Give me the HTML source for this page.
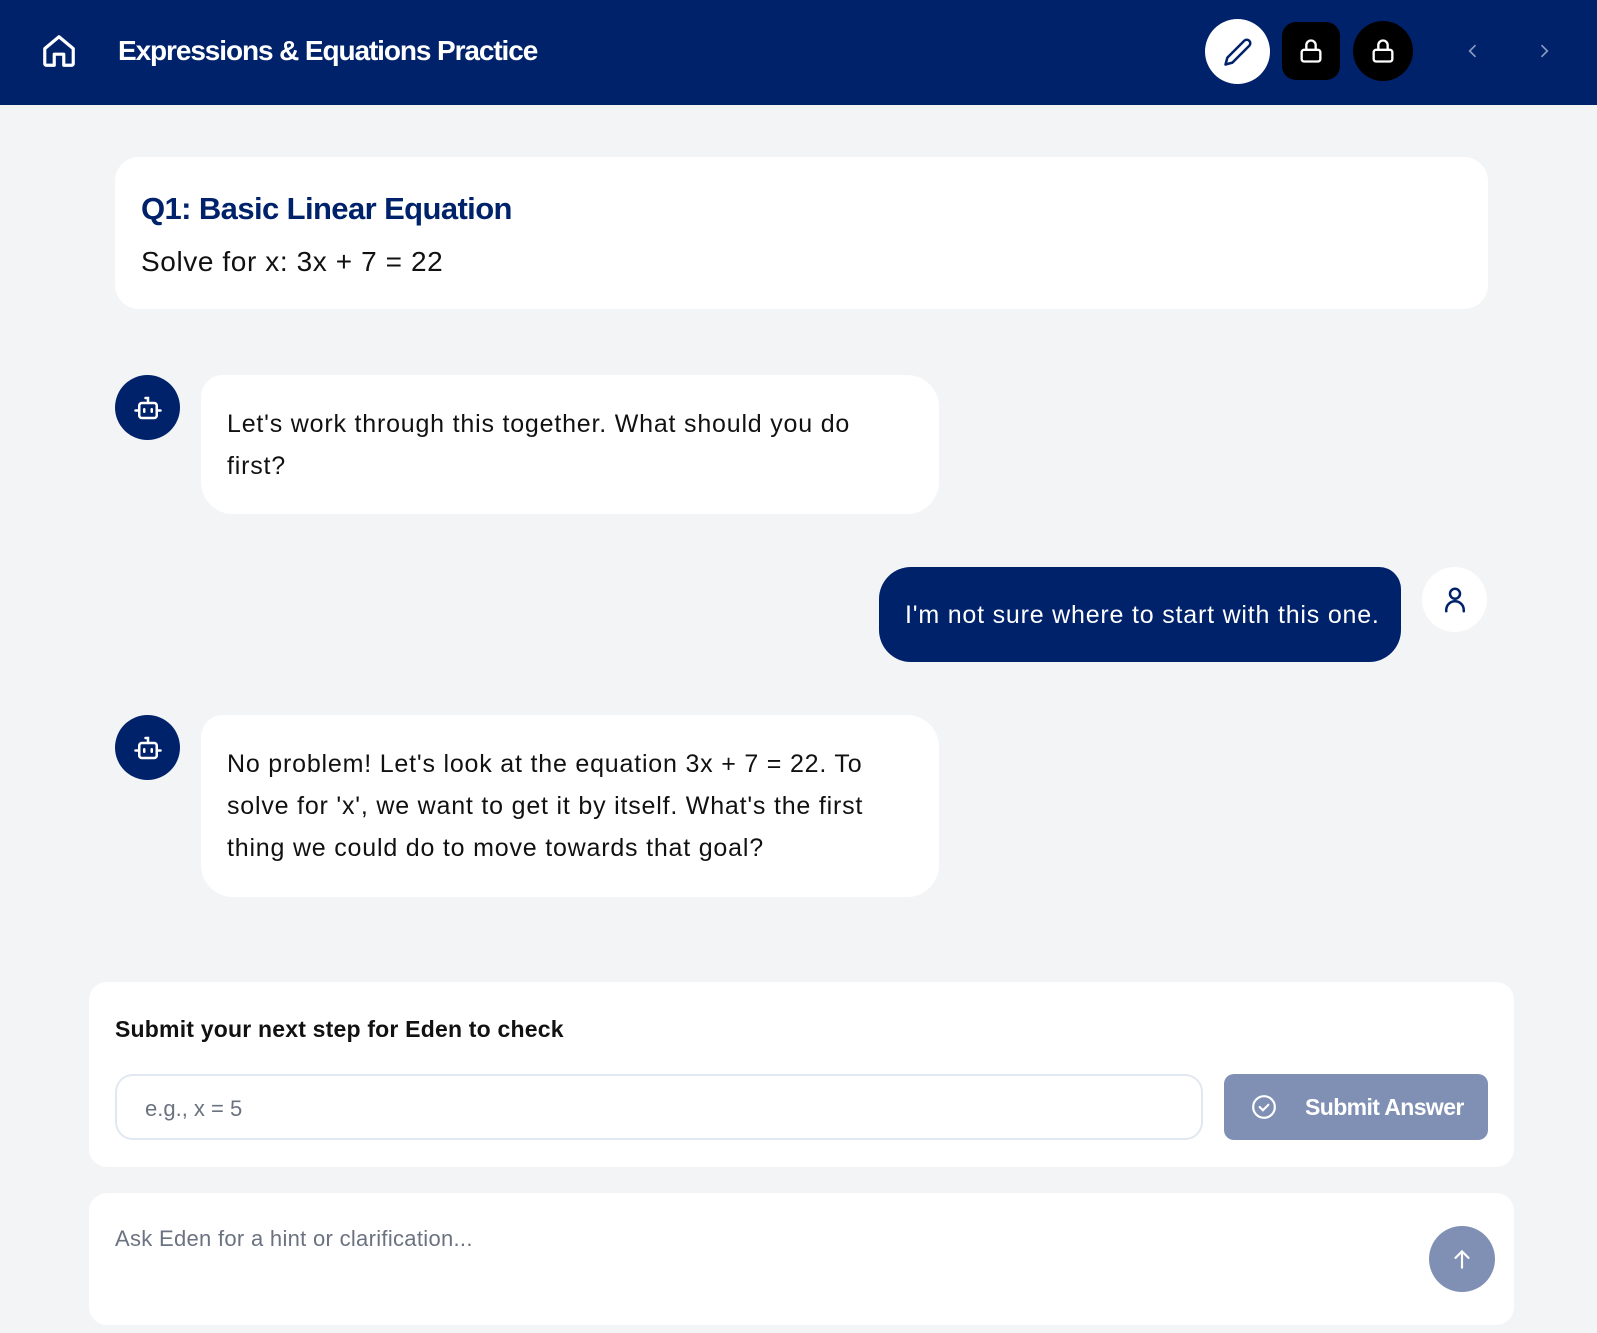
<!DOCTYPE html>
<html><head><meta charset="utf-8"><style>
*{box-sizing:border-box;margin:0;padding:0}
body{width:1597px;height:1333px;background:#f3f4f6;font-family:"Liberation Sans",sans-serif;position:relative;overflow:hidden;color:#111}
.a{position:absolute}
.hdr{left:0;top:0;width:1597px;height:105px;background:#00226b}
.title{left:118px;top:35px;color:#fff;font-size:28px;font-weight:bold;letter-spacing:-1.1px}
.card{background:#fff;border-radius:24px}
.bub{background:#fff;border-radius:32px;font-size:25px;letter-spacing:0.8px;line-height:42px;padding:28px 22px 22px 26px;color:#111}
.av{width:65px;height:65px;border-radius:50%;background:#00226b;display:flex;align-items:center;justify-content:center}
</style></head><body>
<div class="a hdr"></div>
<svg class="a" style="left:40px;top:32px" width="38" height="38" viewBox="0 0 24 24" fill="none" stroke="#fff" stroke-width="2" stroke-linecap="round" stroke-linejoin="round"><path d="M3 10.5L12 3l9 7.5V20a1 1 0 0 1-1 1h-5v-7h-6v7H4a1 1 0 0 1-1-1z"/></svg>
<div class="a title">Expressions &amp; Equations Practice</div>
<div class="a" style="left:1205px;top:19px;width:65px;height:65px;border-radius:50%;background:#fff;display:flex;align-items:center;justify-content:center"><svg width="30" height="30" viewBox="0 0 24 24" fill="none" stroke="#00226b" stroke-width="2" stroke-linecap="round" stroke-linejoin="round"><path d="M17 3a2.8 2.8 0 0 1 4 4L7.5 20.5 2 22l1.5-5.5z"/></svg></div>
<div class="a" style="left:1282px;top:22px;width:58px;height:58px;border-radius:14px;background:#000;display:flex;align-items:center;justify-content:center"><svg width="28" height="28" viewBox="0 0 24 24" fill="none" stroke="#fff" stroke-width="2" stroke-linecap="round" stroke-linejoin="round"><rect x="4" y="11" width="16" height="10" rx="2"/><path d="M8 11V7a4 4 0 0 1 8 0v4"/></svg></div>
<div class="a" style="left:1353px;top:21px;width:60px;height:60px;border-radius:50%;background:#000;display:flex;align-items:center;justify-content:center"><svg width="28" height="28" viewBox="0 0 24 24" fill="none" stroke="#fff" stroke-width="2" stroke-linecap="round" stroke-linejoin="round"><rect x="4" y="11" width="16" height="10" rx="2"/><path d="M8 11V7a4 4 0 0 1 8 0v4"/></svg></div>
<svg class="a" style="left:1463px;top:41px" width="20" height="20" viewBox="0 0 24 24" fill="none" stroke="#8a9bc4" stroke-width="2"><path d="M15 5l-7 7 7 7"/></svg>
<svg class="a" style="left:1534px;top:41px" width="20" height="20" viewBox="0 0 24 24" fill="none" stroke="#8a9bc4" stroke-width="2"><path d="M9 5l7 7-7 7"/></svg>

<div class="a card" style="left:115px;top:157px;width:1373px;height:152px"></div>
<div class="a" style="left:141px;top:191px;font-size:31px;font-weight:bold;color:#00226b;letter-spacing:-0.6px">Q1: Basic Linear Equation</div>
<div class="a" style="left:141px;top:246px;font-size:28px;color:#111;letter-spacing:0.6px">Solve for x: 3x + 7 = 22</div>

<div class="a av" style="left:115px;top:375px"><svg width="30" height="30" viewBox="0 0 24 24" fill="none" stroke="#fff" stroke-width="2" stroke-linecap="round"><rect x="5" y="8" width="14" height="12" rx="2"/><path d="M12 8V4H10M2 14h3M19 14h3M9 13v2M15 13v2"/></svg></div>
<div class="a bub" style="left:201px;top:375px;width:738px;height:139px;border-top-left-radius:22px">Let's work through this together. What should you do<br>first?</div>

<div class="a bub" style="left:879px;top:567px;width:522px;height:95px;background:#00226b;color:#fff;padding-top:27px;padding-right:10px;border-top-right-radius:22px;white-space:nowrap">I'm not sure where to start with this one.</div>
<div class="a av" style="left:1422px;top:567px;background:#fff"><svg width="30" height="30" viewBox="0 0 24 24" fill="none" stroke="#00226b" stroke-width="2" stroke-linecap="round"><circle cx="12" cy="7" r="4"/><path d="M5 21v-1a7 7 0 0 1 14 0v1"/></svg></div>

<div class="a av" style="left:115px;top:715px"><svg width="30" height="30" viewBox="0 0 24 24" fill="none" stroke="#fff" stroke-width="2" stroke-linecap="round"><rect x="5" y="8" width="14" height="12" rx="2"/><path d="M12 8V4H10M2 14h3M19 14h3M9 13v2M15 13v2"/></svg></div>
<div class="a bub" style="left:201px;top:715px;width:738px;height:182px;border-top-left-radius:22px">No problem! Let's look at the equation 3x + 7 = 22. To<br>solve for 'x', we want to get it by itself. What's the first<br>thing we could do to move towards that goal?</div>

<div class="a card" style="left:89px;top:982px;width:1425px;height:185px;border-radius:18px"></div>
<div class="a" style="left:115px;top:1016px;font-size:23px;font-weight:bold;letter-spacing:0.2px">Submit your next step for Eden to check</div>
<div class="a" style="left:115px;top:1074px;width:1088px;height:66px;border:2.5px solid #e2e8f0;border-radius:18px;font-size:22px;color:#6b7280;padding:20px 0 0 28px">e.g., x = 5</div>
<div class="a" style="left:1224px;top:1074px;width:264px;height:66px;border-radius:10px;background:#8090b5;color:#fff;font-size:23px;font-weight:bold;display:flex;align-items:center;letter-spacing:-0.6px"><svg style="margin-left:27px;margin-right:28px" width="26" height="26" viewBox="0 0 24 24" fill="none" stroke="#fff" stroke-width="2" stroke-linecap="round"><circle cx="12" cy="12" r="10"/><path d="M8 12l3 3 5-5"/></svg>Submit Answer</div>

<div class="a card" style="left:89px;top:1193px;width:1425px;height:132px;border-radius:18px"></div>
<div class="a" style="left:115px;top:1226px;font-size:22px;color:#6b7280;letter-spacing:0.3px">Ask Eden for a hint or clarification...</div>
<div class="a" style="left:1429px;top:1226px;width:66px;height:66px;border-radius:50%;background:#8090b5;display:flex;align-items:center;justify-content:center"><svg width="26" height="26" viewBox="0 0 24 24" fill="none" stroke="#fff" stroke-width="2" stroke-linecap="round"><path d="M12 20V5M6 11l6-6 6 6"/></svg></div>
</body></html>
